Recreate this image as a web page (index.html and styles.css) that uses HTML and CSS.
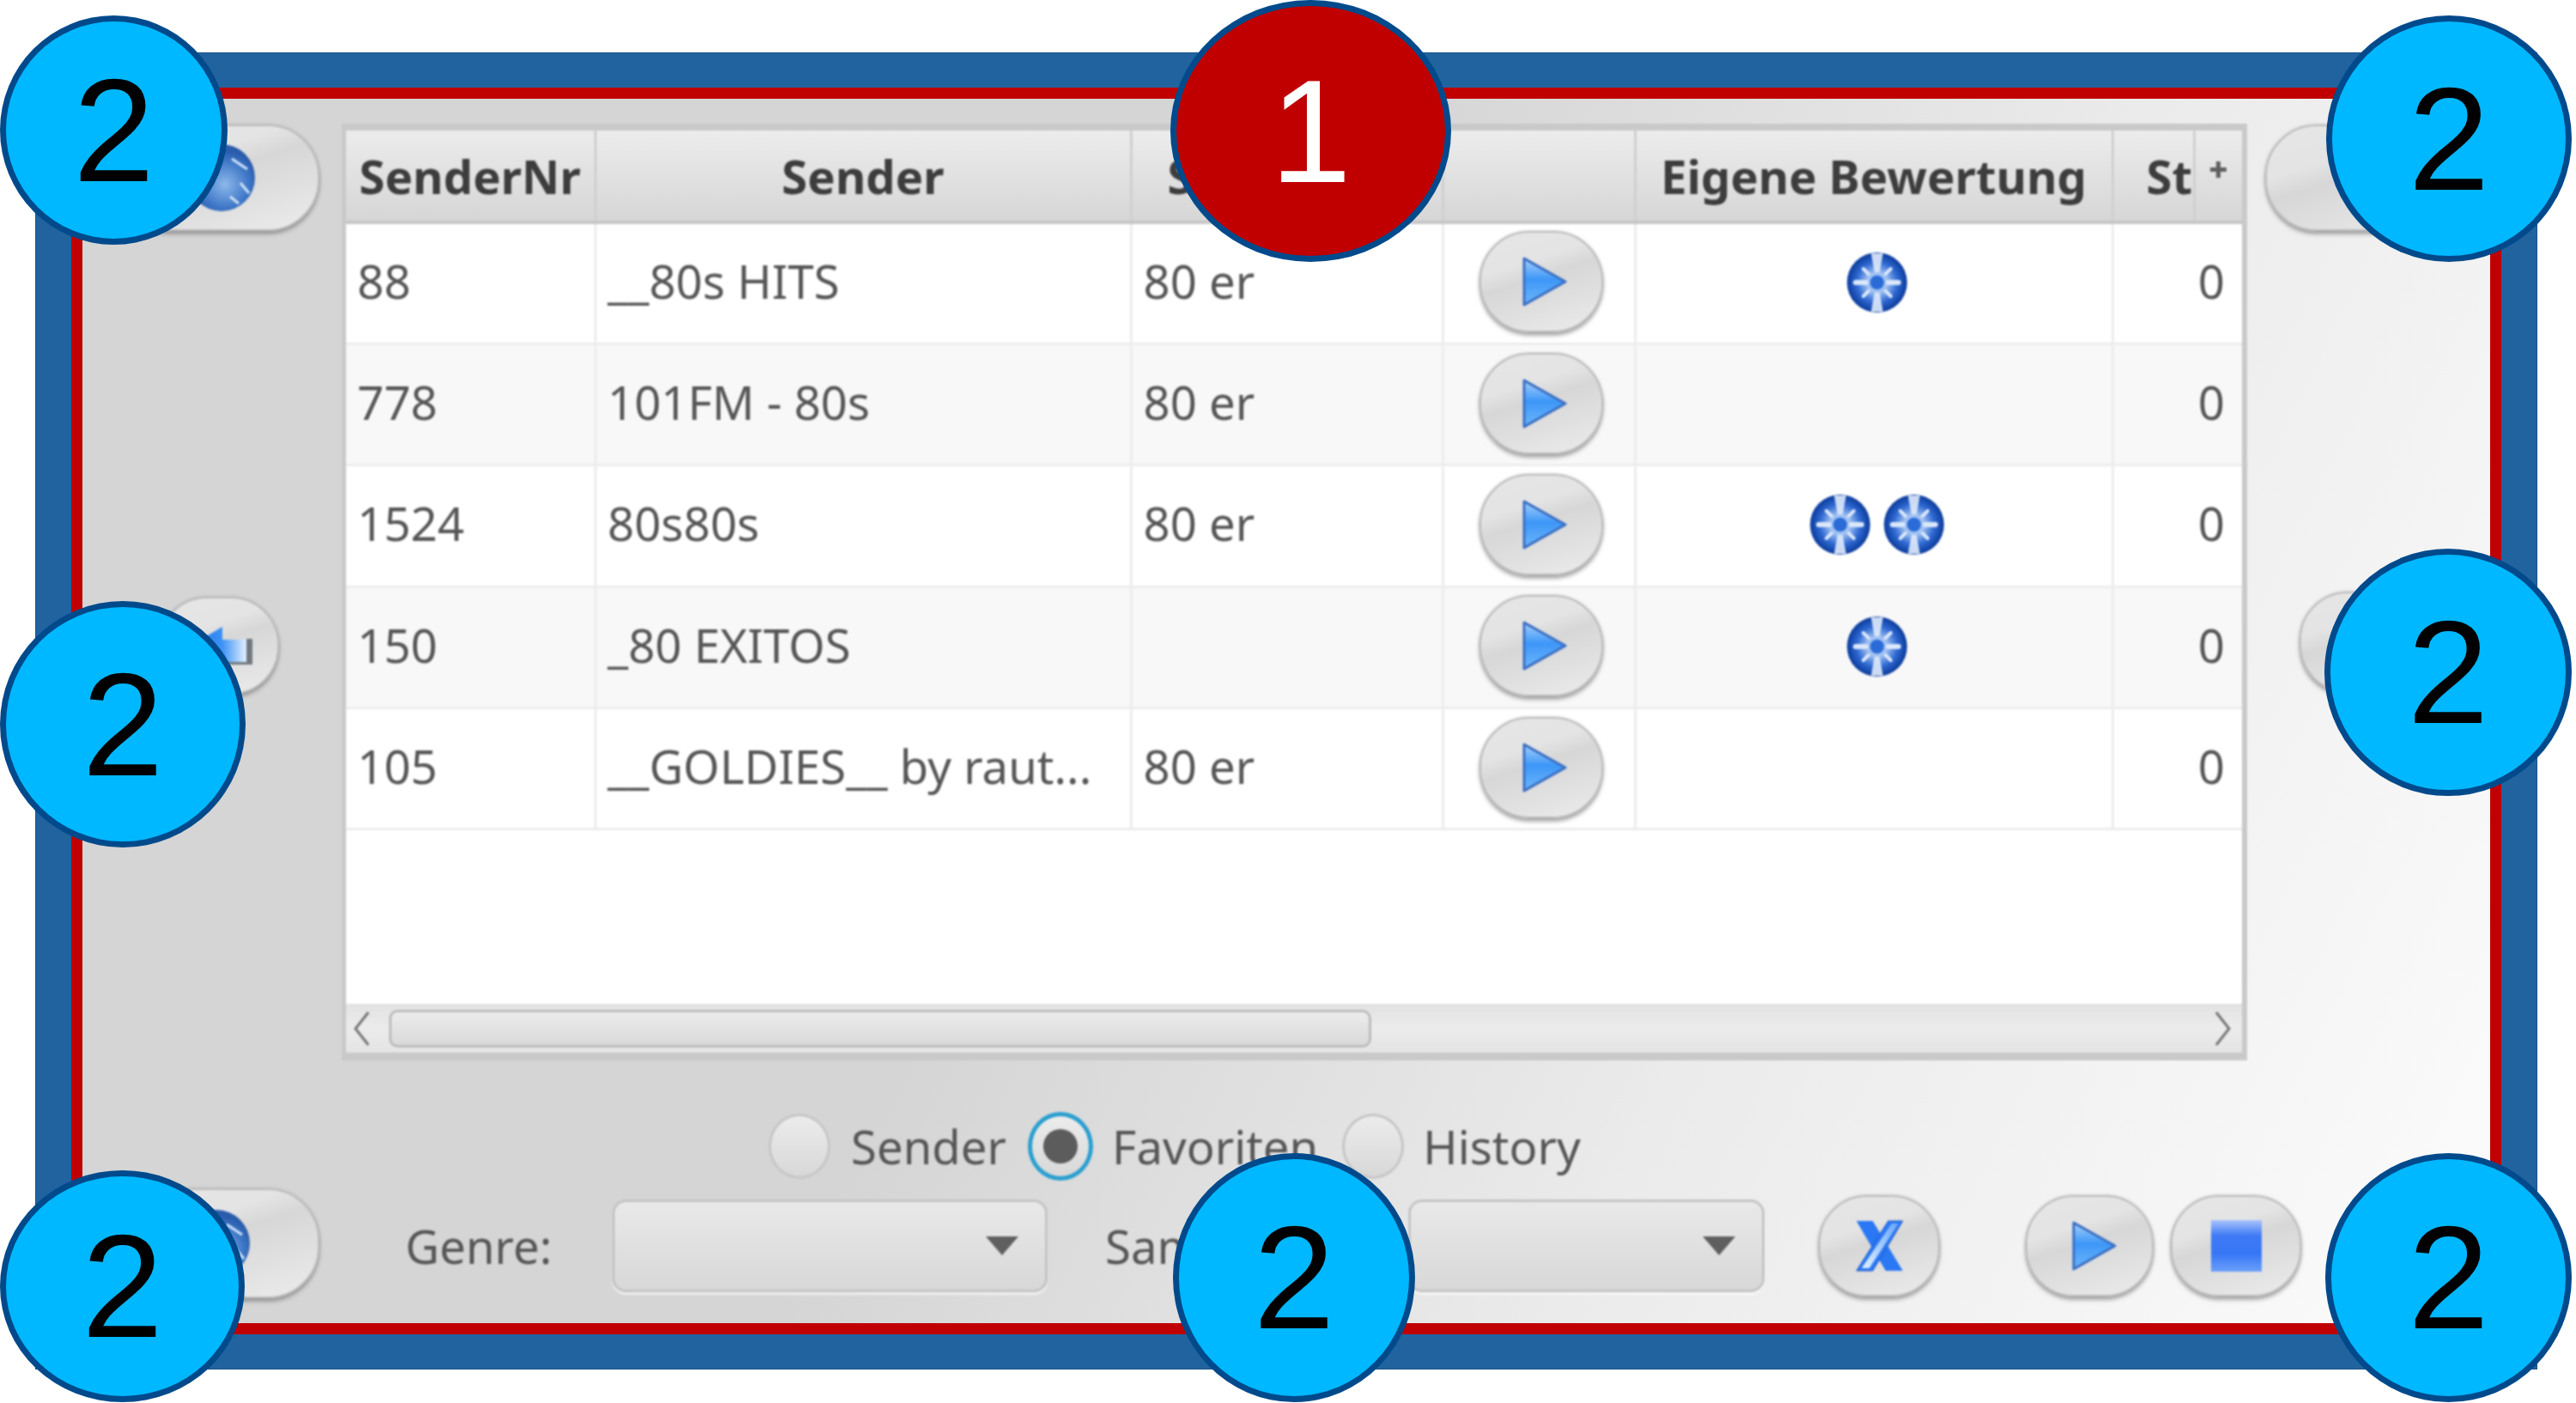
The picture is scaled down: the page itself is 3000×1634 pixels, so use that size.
FILE: index.html
```html
<!DOCTYPE html>
<html lang="de">
<head>
    <meta charset="UTF-8">
    <title>Sender Favoriten</title>
    <link rel="stylesheet" href="styles.css">
</head>
<body>
    <svg class="defs" xmlns="http://www.w3.org/2000/svg">
        <defs>
            <linearGradient id="playFill" x1="0" y1="0" x2="0" y2="1">
                <stop offset="0" stop-color="#a9d0fb"/>
                <stop offset="0.45" stop-color="#3d97f7"/>
                <stop offset="1" stop-color="#6cb6fb"/>
            </linearGradient>
            <linearGradient id="stopFill" x1="0" y1="0" x2="0" y2="1">
                <stop offset="0" stop-color="#a9c3fb"/>
                <stop offset="0.3" stop-color="#3f7af5"/>
                <stop offset="0.65" stop-color="#3677f6"/>
                <stop offset="1" stop-color="#6b9ffa"/>
            </linearGradient>
            <linearGradient id="xLight" x1="0" y1="1" x2="1" y2="0">
                <stop offset="0" stop-color="#e2f0ff"/>
                <stop offset="1" stop-color="#6aa8f8"/>
            </linearGradient>
            <radialGradient id="ballFill">
                <stop offset="0" stop-color="#2f70dc"/>
                <stop offset="0.3" stop-color="#a9c8f4"/>
                <stop offset="0.68" stop-color="#2f69d2"/>
                <stop offset="1" stop-color="#0a3a9a"/>
            </radialGradient>
            <radialGradient id="globeFill" cx="0.55" cy="0.6">
                <stop offset="0" stop-color="#8db8ea"/>
                <stop offset="0.7" stop-color="#3f78c8"/>
                <stop offset="1" stop-color="#2a5cac"/>
            </radialGradient>
            <linearGradient id="backFill" x1="0" y1="0" x2="1" y2="0">
                <stop offset="0" stop-color="#1668e8"/>
                <stop offset="0.6" stop-color="#3d93f5"/>
                <stop offset="1" stop-color="#e4f0ff"/>
            </linearGradient>
            <symbol id="play" viewBox="0 0 52 58">
                <polygon points="2,2 50,29 2,56" fill="url(#playFill)" stroke="#3a6fc4" stroke-width="3" stroke-linejoin="round"/>
            </symbol>
            <symbol id="ball" viewBox="0 0 72 72">
                <circle cx="36" cy="36" r="35" fill="url(#ballFill)"/>
                <path d="M29 2H43L39 24H33ZM29 70H43L39 48H33Z" fill="#dfeafb" opacity="0.9"/>
                <g stroke="#dbe8fb" stroke-linecap="round">
                    <path d="M11 36H23M49 36H61" stroke-width="6"/>
                    <path d="M20 20L26 26M52 20L46 26M20 52L26 46M52 52L46 46" stroke-width="4"/>
                </g>
                <circle cx="36" cy="36" r="8" fill="#2a6bd8"/>
            </symbol>
            <symbol id="globe" viewBox="0 0 80 80">
                <circle cx="40" cy="40" r="39" fill="url(#globeFill)"/>
                <path d="M52 18L70 30M62 46L72 58M50 62L60 70" stroke="#cfe2f8" stroke-width="3"/>
            </symbol>
        </defs>
    </svg>

    <div class="frame">
        <div class="panel">
            <div class="main">
                <div class="side side-left">
                    <button class="btn btn-wide"><svg class="ico-globe"><use href="#globe"/></svg></button>
                    <button class="btn btn-back">
                        <svg class="ico-back" viewBox="0 0 80 46">
                            <path d="M2 26L44 1V16H72V45H44Z" fill="url(#backFill)"/>
                            <rect x="72" y="15" width="7" height="30" fill="#70787f"/>
                            <rect x="44" y="42" width="30" height="3" fill="#70787f"/>
                        </svg>
                    </button>
                </div>

                <div class="table-frame">
                    <div class="table-view">
                        <table class="grid">
                            <colgroup>
                                <col class="c-nr"><col class="c-name"><col class="c-genre"><col class="c-play"><col class="c-rate"><col class="c-st"><col class="c-corner">
                            </colgroup>
                            <thead>
                                <tr>
                                    <th>SenderNr</th>
                                    <th>Sender</th>
                                    <th class="th-sub">Subgenre</th>
                                    <th></th>
                                    <th>Eigene Bewertung</th>
                                    <th class="th-st">St</th>
                                    <th class="corner">&#10010;</th>
                                </tr>
                            </thead>
                            <tbody>
                                <tr>
                                    <td>88</td><td>__80s HITS</td><td>80 er</td>
                                    <td><button class="btn btn-row"><svg class="ico-play"><use href="#play"/></svg></button></td>
                                    <td><div class="balls"><svg class="ico-ball"><use href="#ball"/></svg></div></td>
                                    <td class="num" colspan="2">0</td>
                                </tr>
                                <tr>
                                    <td>778</td><td>101FM - 80s</td><td>80 er</td>
                                    <td><button class="btn btn-row"><svg class="ico-play"><use href="#play"/></svg></button></td>
                                    <td></td>
                                    <td class="num" colspan="2">0</td>
                                </tr>
                                <tr>
                                    <td>1524</td><td>80s80s</td><td>80 er</td>
                                    <td><button class="btn btn-row"><svg class="ico-play"><use href="#play"/></svg></button></td>
                                    <td><div class="balls"><svg class="ico-ball"><use href="#ball"/></svg><svg class="ico-ball"><use href="#ball"/></svg></div></td>
                                    <td class="num" colspan="2">0</td>
                                </tr>
                                <tr>
                                    <td>150</td><td>_80 EXITOS</td><td></td>
                                    <td><button class="btn btn-row"><svg class="ico-play"><use href="#play"/></svg></button></td>
                                    <td><div class="balls"><svg class="ico-ball"><use href="#ball"/></svg></div></td>
                                    <td class="num" colspan="2">0</td>
                                </tr>
                                <tr>
                                    <td>105</td><td>__GOLDIES__ by raut...</td><td>80 er</td>
                                    <td><button class="btn btn-row"><svg class="ico-play"><use href="#play"/></svg></button></td>
                                    <td></td>
                                    <td class="num" colspan="2">0</td>
                                </tr>
                            </tbody>
                        </table>
                    </div>
                    <div class="scrollbar">
                        <svg class="arrow" viewBox="0 0 24 44"><path d="M20 3L5 22L20 41" fill="none" stroke="#777" stroke-width="3"/></svg>
                        <div class="thumb"></div>
                        <svg class="arrow arrow-right" viewBox="0 0 24 44"><path d="M4 3L19 22L4 41" fill="none" stroke="#777" stroke-width="3"/></svg>
                    </div>
                </div>

                <div class="side side-right">
                    <button class="btn btn-wide-right"></button>
                    <button class="btn btn-next"></button>
                </div>
            </div>

            <div class="radios">
                <span class="radio"></span><span class="radio-label label-sender">Sender</span>
                <span class="radio radio-on"><span class="dot"></span></span><span class="radio-label label-fav">Favoriten</span>
                <span class="radio"></span><span class="radio-label label-history">History</span>
            </div>

            <div class="controls">
                <button class="btn btn-bottom-left"><svg class="ico-globe"><use href="#globe"/></svg></button>
                <span class="field-label label-genre">Genre:</span>
                <div class="combo combo-genre"><svg class="combo-arrow" viewBox="0 0 40 24"><polygon points="1,1 39,1 20,23" fill="#5f5f5f"/></svg></div>
                <span class="field-label label-sampler">Sampler:</span>
                <div class="combo combo-sampler"><svg class="combo-arrow" viewBox="0 0 40 24"><polygon points="1,1 39,1 20,23" fill="#5f5f5f"/></svg></div>
                <button class="btn btn-x">
                    <svg class="ico-x" viewBox="0 0 56 60">
                        <polygon points="1,1 20,1 55,59 35,59" fill="#2a78f4"/>
                        <polygon points="38,1 55,1 20,59 1,59" fill="#2a78f4" stroke="#1f5bc4" stroke-width="1"/>
                        <polygon points="42,4 50,4 16,56 7,56" fill="url(#xLight)"/>
                    </svg>
                </button>
                <button class="btn btn-play"><svg class="ico-play-big"><use href="#play"/></svg></button>
                <button class="btn btn-stop"><svg class="ico-stop" viewBox="0 0 59 60"><rect width="59" height="60" fill="url(#stopFill)"/></svg></button>
            </div>
        </div>
    </div>

    <div class="callout c-red c1">1</div>
    <div class="callout c2 c-top-left">2</div>
    <div class="callout c2 c-top-right">2</div>
    <div class="callout c2 c-mid-left">2</div>
    <div class="callout c2 c-mid-right">2</div>
    <div class="callout c2 c-bot-left">2</div>
    <div class="callout c2 c-bot-mid">2</div>
    <div class="callout c2 c-bot-right">2</div>
</body>
</html>
```

FILE: styles.css
```css
html, body { margin: 0; background: #fff; }
body { position: relative; width: 3000px; height: 1634px; overflow: hidden; font-family: "Noto Sans", "Open Sans", sans-serif; color: #565656; }
.defs { display: block; width: 0; height: 0; }
button { padding: 0; font: inherit; }

/* window */
.frame { box-sizing: border-box; width: 2914px; height: 1534px; margin: 61px 0 0 41px; padding: 40px 41px; background: #21639f; border: 1px solid #1b5488; }
.panel { box-sizing: border-box; height: 1452px; border: 13px solid #c00000; background: linear-gradient(116deg, #d5d5d5 0%, #d5d5d5 43%, #ebebeb 69%, #fcfcfc 100%); padding-top: 29px; }
.main, .radios, .controls { filter: blur(0.8px); }
.main { display: flex; height: 1091px; }

/* glossy buttons */
.btn { display: flex; align-items: center; justify-content: center; box-sizing: border-box; border: 2px solid #bdbdbd; background: linear-gradient(162deg, #e6e6e6 0%, #e4e4e4 32%, #d7d7d7 46%, #e0e0e0 70%, #ececec 100%); box-shadow: 0 4px 4px rgba(110, 110, 110, 0.55), 0 0 3px rgba(130, 130, 130, 0.5); }

.side { display: flex; flex-direction: column; flex: none; }
.side-left { width: 302px; box-sizing: border-box; padding: 1px 0 0 40px; }
.btn-wide { width: 236px; height: 124px; border-radius: 60px; padding-left: 8px; }
.btn-back { width: 140px; height: 114px; border-radius: 56px; margin: 426px 0 0 49px; }
.ico-globe { width: 80px; height: 80px; }
.ico-back { width: 80px; height: 46px; }
.side-right { padding: 1px 0 0 21px; }
.btn-wide-right { width: 230px; height: 124px; border-radius: 60px; }
.btn-next { width: 140px; height: 118px; border-radius: 56px; margin: 420px 0 0 40px; }

/* table */
.table-frame { box-sizing: border-box; flex: none; width: 2219px; height: 1091px; border: solid #c9c9c9; border-width: 8px 6px 9px 5px; }
.table-view { height: 1017px; background: #fff; overflow: hidden; }
.grid { border-collapse: collapse; table-layout: fixed; width: 2208px; font-size: 54.5px; }
.c-nr { width: 290px; }
.c-name { width: 624px; }
.c-genre { width: 363px; }
.c-play { width: 224px; }
.c-rate { width: 556px; }
.c-st { width: 95px; }
.c-corner { width: 56px; }
.grid th { box-sizing: border-box; height: 107px; padding: 0 2px; background: linear-gradient(#ececec, #d6d6d6); border-right: 3px solid #d0d0d0; border-bottom: 4px solid #c6c6c6; color: #3d3d3d; font-weight: 700; font-size: 54.5px; white-space: nowrap; overflow: hidden; }
.grid th.corner { border-right: 0; padding: 0 0 14px; font-family: "DejaVu Sans", sans-serif; font-size: 26px; color: #5f5f5f; }
.grid th.th-sub { text-align: left; padding-left: 41px; }
.grid th.th-st { text-align: left; padding-left: 38px; }
.grid td { box-sizing: border-box; height: 141.4px; padding: 0 0 6px 13px; border-right: 3px solid #ededed; border-bottom: 3px solid #ededed; white-space: nowrap; overflow: hidden; }
.grid tbody tr:nth-child(even) td { background: #f8f8f8; }
.grid td.num { text-align: right; padding-right: 20px; border-right: 0; }
.btn-row { width: 144px; height: 118px; margin: 3px 0 0 28px; border-radius: 58px; padding-left: 8px; }
.ico-play { width: 52px; height: 58px; }
.balls { display: flex; justify-content: center; gap: 14px; margin-top: 4px; padding-right: 6px; }
.ico-ball { width: 72px; height: 72px; filter: blur(0.6px); }

.scrollbar { display: flex; align-items: center; height: 57px; padding: 0 10px 0 6px; background: linear-gradient(#e2e2e2, #ececec 50%, #e4e4e4); }
.arrow { width: 24px; height: 44px; flex: none; }
.arrow-right { margin-left: auto; }
.thumb { box-sizing: border-box; width: 1144px; height: 44px; margin-left: 20px; border: 3px solid #bdbdbd; border-radius: 10px; background: linear-gradient(#ececec, #d9d9d9); }

/* radio row */
.radios { display: flex; align-items: center; height: 83px; margin: 58px 0 0 799px; font-size: 54.5px; }
.radio { box-sizing: border-box; display: flex; align-items: center; justify-content: center; flex: none; width: 72px; height: 76px; border: 3px solid #c6c6c6; border-radius: 50%; background: linear-gradient(#ececec, #d8d8d8); }
.radio-on { width: 76px; height: 80px; border: 5px solid #2a9fd0; }
.dot { width: 40px; height: 40px; border-radius: 50%; background: #5c5c5c; }
.radio-label { margin-left: 24px; }
.label-sender { margin-right: 25px; }
.label-fav { margin-left: 22px; margin-right: 28px; }
.label-history { margin-left: 22px; }

/* bottom controls */
.controls { display: flex; align-items: center; height: 124px; margin-top: 13px; font-size: 54.5px; }
.btn-bottom-left { flex: none; width: 236px; height: 128px; margin: -6px 0 0 40px; border-radius: 60px; padding-right: 4px; }
.field-label { flex: none; }
.label-genre { width: 171px; margin-left: 100px; }
.label-sampler { width: 353px; margin-left: 67px; }
.combo { display: flex; align-items: center; justify-content: flex-end; box-sizing: border-box; flex: none; height: 108px; padding-right: 30px; border: 3px solid #c4c4c4; border-radius: 16px; background: linear-gradient(#e9e9e9, #d8d8d8); box-shadow: 0 3px 2px rgba(255, 255, 255, 0.6); }
.combo-genre { width: 507px; margin-left: 70px; }
.combo-sampler { width: 415px; }
.combo-arrow { width: 40px; height: 24px; }
.btn-x { flex: none; width: 141px; height: 118px; margin-left: 63px; border-radius: 56px; }
.ico-x { width: 56px; height: 60px; }
.btn-play { flex: none; width: 149px; height: 118px; margin-left: 100px; border-radius: 56px; padding-left: 10px; }
.ico-play-big { width: 52px; height: 60px; }
.btn-stop { flex: none; width: 152px; height: 118px; margin-left: 20px; border-radius: 56px; }
.ico-stop { width: 59px; height: 60px; }

/* numbered callouts on top of the screenshot */
.callout { position: absolute; display: flex; align-items: center; justify-content: center; box-sizing: border-box; border: 7px solid #004a8c; border-radius: 50%; background: #00b8ff; color: #000; font-family: "Liberation Sans", Arial, sans-serif; font-size: 170px; line-height: 1; }
.c-red { background: #c00000; color: #fff; }
.c1 { left: 1363px; top: 0; width: 327px; height: 305px; }
.c-top-left { left: 0; top: 18px; width: 265px; height: 267px; }
.c-top-right { left: 2709px; top: 18px; width: 286px; height: 287px; }
.c-mid-left { left: 0; top: 700px; width: 286px; height: 287px; }
.c-mid-right { left: 2707px; top: 639px; width: 288px; height: 288px; }
.c-bot-left { left: 0; top: 1363px; width: 285px; height: 270px; }
.c-bot-mid { left: 1366px; top: 1343px; width: 282px; height: 290px; }
.c-bot-right { left: 2708px; top: 1343px; width: 287px; height: 290px; }
```
